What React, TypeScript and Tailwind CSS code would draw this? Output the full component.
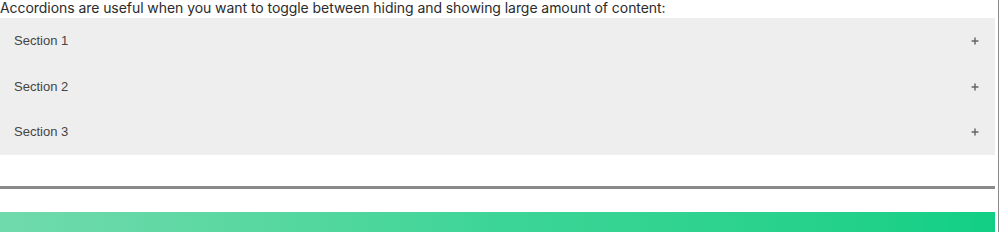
import { Plus } from "lucide-react";

const SECTIONS = ["Section 1", "Section 2", "Section 3"];

export default function App() {
  return (
    <div className="flex h-[232px] w-[1000px] bg-white">
      <div className="flex w-[995px] flex-col">
        <p className="h-[18px] text-[14px] leading-[16px] tracking-[-0.06px] text-[#2b2b2b] [font-family:Inter,'Noto_Sans',sans-serif]">
          Accordions are useful when you want to toggle between hiding and showing large amount of content:
        </p>
        <div className="flex h-[137px] flex-col bg-[#eeeeee] [font-family:'Liberation_Sans',Arial,sans-serif]">
          {SECTIONS.map((s) => (
            <button
              key={s}
              className="flex flex-1 items-center justify-between pl-[14px] pr-[15px] text-left text-[13px] text-[#444]"
            >
              <span>{s}</span>
              <Plus className="h-[10px] w-[10px] text-[#666]" strokeWidth={3.5} />
            </button>
          ))}
        </div>
        <div className="h-[31px]" />
        <div className="h-[3px] bg-[#8a8a8a]" />
        <div className="h-[23px]" />
        <div className="h-[20px] bg-gradient-to-r from-[#70daac] via-[#3cd597] to-[#10cf85]" />
      </div>
      <div className="w-[3px]" />
      <div className="w-px bg-[#8a8a8a]" />
    </div>
  );
}
